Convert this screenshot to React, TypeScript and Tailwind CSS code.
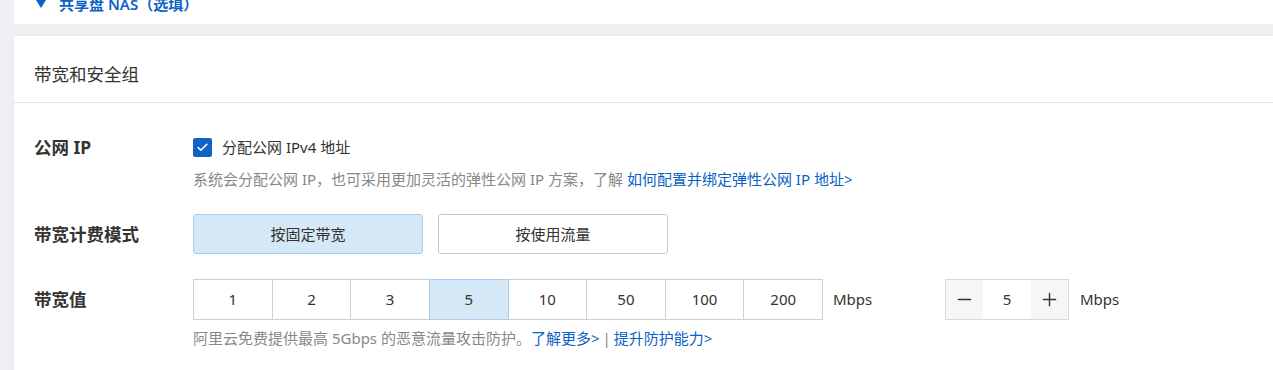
import React from 'react';
import { Check, Minus, Plus } from 'lucide-react';

const bandwidths = ['1', '2', '3', '5', '10', '50', '100', '200'];

export default function App() {
  const [assignIp, setAssignIp] = React.useState(true);
  const [billing, setBilling] = React.useState('fixed');
  const [bw, setBw] = React.useState('5');

  return (
    <div className="min-h-[370px] w-full bg-[#eef0f3] pl-[14px] font-['Noto_Sans','Noto_Sans_CJK_SC',sans-serif] text-[#333]">
      {/* NAS section (scrolled mostly out of view) */}
      <div className="h-[24px] overflow-hidden bg-white">
        <div className="-mt-[6px] flex h-[20px] items-center pl-[22px] text-[15px] font-semibold text-[#0a62c6]">
          <svg className="mr-[13px] h-[8px] w-[10px]" viewBox="0 0 10 8">
            <path d="M0 0h10L5 8z" fill="currentColor" />
          </svg>
          <span>共享盘 NAS（选填）</span>
        </div>
      </div>

      {/* Bandwidth & security group */}
      <div className="mt-[12px] rounded-tl-[2px] bg-white shadow-[0_0_3px_rgba(0,0,0,0.06)]">
        <div className="h-[67px] border-b border-[#e3e3e3] px-[20px] pt-[27px] text-[17.5px] leading-[22px] text-[#333]">
          带宽和安全组
        </div>

        <div className="px-[20px] pb-[40px] pt-[34px]">
          {/* 公网 IP */}
          <div className="flex">
            <div className="flex h-[20px] w-[159px] shrink-0 items-center text-[17.5px] font-bold">公网 IP</div>
            <div>
              <label className="flex h-[20px] cursor-pointer items-center text-[15px]">
                <button
                  onClick={() => setAssignIp(!assignIp)}
                  className={`mr-[10px] flex h-[19px] w-[19px] items-center justify-center rounded-[2px] ${assignIp ? 'bg-[#1062c4]' : 'border border-[#bbb] bg-white'}`}
                >
                  {assignIp && <Check className="h-[13px] w-[13px] text-white" strokeWidth={3} />}
                </button>
                分配公网 IPv4 地址
              </label>
              <div className="mt-[12px] h-[20px] text-[15px] leading-[20px] text-[#888]">
                系统会分配公网 IP，也可采用更加灵活的弹性公网 IP 方案，了解{' '}
                <a className="text-[#0a62c6]">如何配置并绑定弹性公网 IP 地址&gt;</a>
              </div>
            </div>
          </div>

          {/* 带宽计费模式 */}
          <div className="mt-[25px] flex items-center">
            <div className="w-[159px] shrink-0 text-[17.5px] font-bold">带宽计费模式</div>
            <button
              onClick={() => setBilling('fixed')}
              className={`h-[40px] w-[230px] rounded-[3px] border text-[15px] ${billing === 'fixed' ? 'border-[#a9cdee] bg-[#d6e8f5]' : 'border-[#c8c8c8] bg-white'}`}
            >
              按固定带宽
            </button>
            <button
              onClick={() => setBilling('traffic')}
              className={`ml-[15px] h-[40px] w-[230px] rounded-[3px] border text-[15px] ${billing === 'traffic' ? 'border-[#a9cdee] bg-[#d6e8f5]' : 'border-[#c8c8c8] bg-white'}`}
            >
              按使用流量
            </button>
          </div>

          {/* 带宽值 */}
          <div className="mt-[25px] flex">
            <div className="flex h-[41px] w-[159px] shrink-0 items-center text-[17.5px] font-bold">带宽值</div>
            <div>
              <div className="flex items-center">
                <div className="flex h-[41px] w-[630px]">
                  {bandwidths.map((v) => (
                    <button
                      key={v}
                      onClick={() => setBw(v)}
                      className={`-ml-px flex-1 border text-[15px] first:ml-0 ${bw === v ? 'relative border-[#a9cdee] bg-[#d6e8f5]' : 'border-[#d0d0d0] bg-white'}`}
                    >
                      {v}
                    </button>
                  ))}
                </div>
                <span className="ml-[10px] w-[112px] text-[15px]">Mbps</span>
                <div className="flex h-[41px] w-[124px] border border-[#d9d9d9]">
                  <button className="flex w-[37px] items-center justify-center bg-[#f5f6f8] text-[#333]">
                    <Minus className="h-[21px] w-[21px]" strokeWidth={1.6} />
                  </button>
                  <div className="flex flex-1 items-center justify-center text-[15px]">{bw}</div>
                  <button className="flex w-[37px] items-center justify-center bg-[#f5f6f8] text-[#333]">
                    <Plus className="h-[21px] w-[21px]" strokeWidth={1.6} />
                  </button>
                </div>
                <span className="ml-[11px] text-[15px]">Mbps</span>
              </div>
              <div className="mt-[8px] h-[20px] text-[15px] leading-[20px] text-[#888]">
                阿里云免费提供最高 5Gbps 的恶意流量攻击防护。
                <a className="text-[#0a62c6]">了解更多&gt;</a>
                <span className="mx-[3px]">|</span>
                <a className="text-[#0a62c6]">提升防护能力&gt;</a>
              </div>
            </div>
          </div>
        </div>
      </div>
    </div>
  );
}
